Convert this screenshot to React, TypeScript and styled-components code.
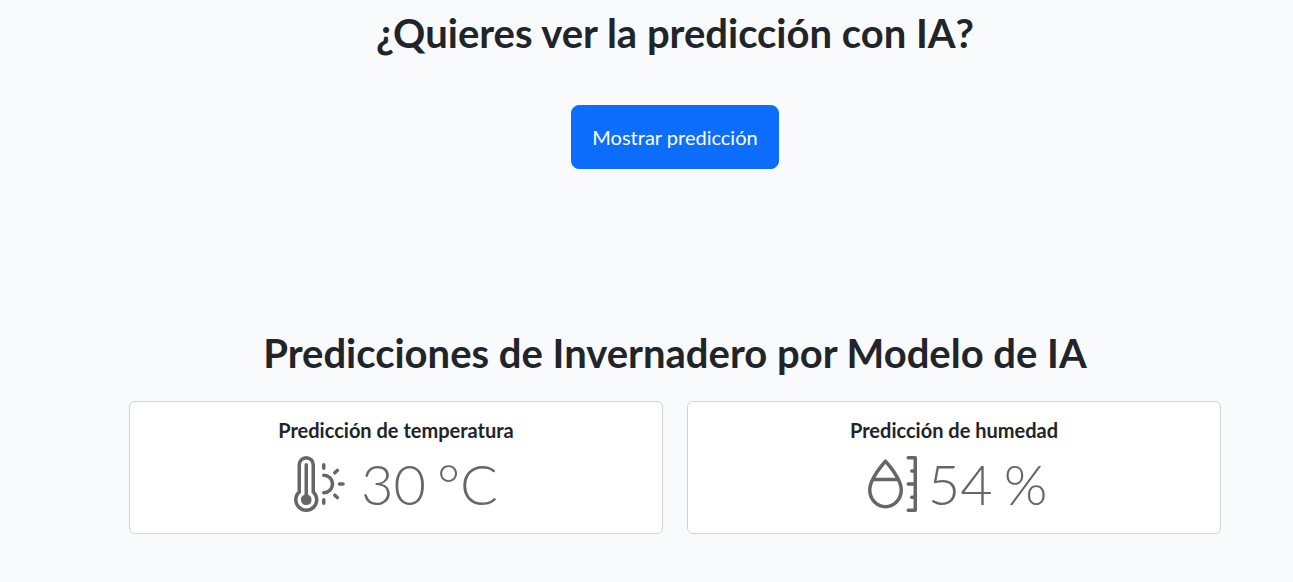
import React from 'react';
import styled, { createGlobalStyle } from 'styled-components';
import { BsMoisture, BsThermometerSun } from 'react-icons/bs';

const GlobalStyle = createGlobalStyle`
  *, *::before, *::after {
    box-sizing: border-box;
  }
  body {
    margin: 0;
    background: #f8fafc;
    color: #212529;
    font-family: Lato, sans-serif;
    font-size: 16px;
    line-height: 24px;
  }
`;

const Main = styled.main`
  margin-left: 57px;
`;

const Container = styled.div`
  max-width: 1140px;
  margin: 0 auto;
  padding: 9px 24px 48px;
`;

const Prompt = styled.section`
  display: flex;
  flex-direction: column;
  align-items: center;
  gap: 48px;
`;

const Results = styled.section`
  margin-top: 160px;
`;

const Heading = styled.h2`
  margin: 0;
  font-size: 40px;
  line-height: 48px;
  font-weight: 700;
  text-align: center;
`;

const PrimaryButton = styled.button`
  padding: 16px 20px;
  border: 1px solid #0d6efd;
  border-radius: 8px;
  background: #0d6efd;
  color: #fff;
  font: inherit;
  font-size: 20px;
  line-height: 30px;
  cursor: pointer;

  &:hover {
    background: #0b5ed7;
  }
`;

const CardGrid = styled.div`
  display: grid;
  grid-template-columns: repeat(auto-fit, minmax(280px, 1fr));
  gap: 24px;
  margin-top: 24px;
`;

const Card = styled.article`
  padding: 16px;
  border: 1px solid #d2d3d4;
  border-radius: 6px;
  background: #fff;
  text-align: center;
`;

const CardTitle = styled.h3`
  margin: 0 0 8px;
  font-size: 20px;
  line-height: 24px;
  font-weight: 700;
`;

const ReadingRow = styled.p`
  display: flex;
  align-items: center;
  justify-content: center;
  gap: 11px;
  margin: 0;
  color: #666;
  font-size: 56px;
  line-height: 67px;
  font-weight: 300;
`;

type ReadingProps = { icon: React.ReactNode; value: number; unit: string };

function Reading({ icon, value, unit }: ReadingProps) {
  return (
    <ReadingRow>
      {icon}
      <span>{value}</span> <span>{unit}</span>
    </ReadingRow>
  );
}

export default function App() {
  return (
    <>
      <GlobalStyle />
      <Main>
        <Container>
          <Prompt>
            <Heading>¿Quieres ver la predicción con IA?</Heading>
            <PrimaryButton type="button">Mostrar predicción</PrimaryButton>
          </Prompt>
          <Results>
            <Heading>Predicciones de Invernadero por Modelo de IA</Heading>
            <CardGrid>
              <Card>
                <CardTitle>Predicción de temperatura</CardTitle>
                <Reading icon={<BsThermometerSun aria-hidden="true" />} value={30} unit="°C" />
              </Card>
              <Card>
                <CardTitle>Predicción de humedad</CardTitle>
                <Reading icon={<BsMoisture aria-hidden="true" />} value={54} unit="%" />
              </Card>
            </CardGrid>
          </Results>
        </Container>
      </Main>
    </>
  );
}
